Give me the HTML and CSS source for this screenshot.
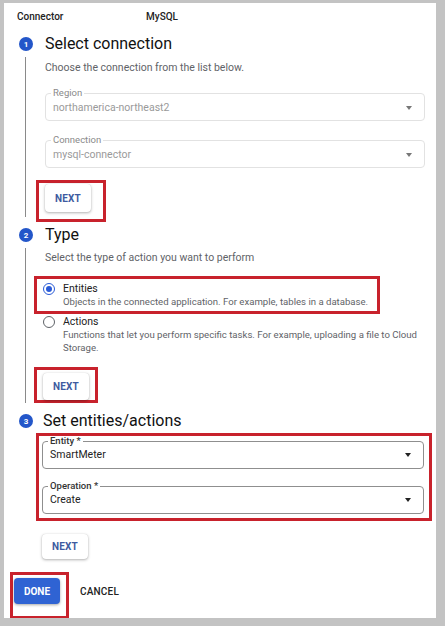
FILE: index.html
```html
<!DOCTYPE html>
<html>
<head>
<meta charset="utf-8">
<link rel="stylesheet" href="styles.css">
</head>
<body>
<div class="panel">
  <div class="hdr"><span class="hdr-k">Connector</span><span class="hdr-v">MySQL</span></div>

  <div class="step">
    <div class="num">1</div>
    <div class="title">Select connection</div>
    <div class="line"></div>
    <div class="body body1">
      <p class="desc">Choose the connection from the list below.</p>
      <fieldset class="field disabled f-region">
        <legend>Region</legend>
        <div class="fv"><span>northamerica-northeast2</span><span class="arrow"></span></div>
      </fieldset>
      <fieldset class="field disabled f-conn">
        <legend>Connection</legend>
        <div class="fv"><span>mysql-connector</span><span class="arrow"></span></div>
      </fieldset>
      <div class="mark mark-next1"><button class="btn-next">NEXT</button></div>
    </div>
  </div>

  <div class="step">
    <div class="num">2</div>
    <div class="title">Type</div>
    <div class="line"></div>
    <div class="body body2">
      <p class="desc">Select the type of action you want to perform</p>
      <div class="mark mark-ent">
        <div class="opt">
          <span class="radio on"></span>
          <div class="opt-text">
            <div class="opt-t">Entities</div>
            <div class="opt-d">Objects in the connected application. For example, tables in a database.</div>
          </div>
        </div>
      </div>
      <div class="opt opt-act">
        <span class="radio"></span>
        <div class="opt-text">
          <div class="opt-t">Actions</div>
          <div class="opt-d">Functions that let you perform specific tasks. For example, uploading a file to Cloud Storage.</div>
        </div>
      </div>
      <div class="mark mark-next2"><button class="btn-next">NEXT</button></div>
    </div>
  </div>

  <div class="step step3">
    <div class="num">3</div>
    <div class="title title3">Set entities/actions</div>
    <div class="body body3">
      <div class="mark mark-fields">
        <fieldset class="field f-ent">
          <legend>Entity *</legend>
          <div class="fv"><span>SmartMeter</span><span class="arrow"></span></div>
        </fieldset>
        <fieldset class="field f-op">
          <legend>Operation *</legend>
          <div class="fv"><span>Create</span><span class="arrow"></span></div>
        </fieldset>
      </div>
      <button class="btn-next next3">NEXT</button>
    </div>
  </div>

  <div class="actions">
    <div class="mark mark-done"><button class="btn-done">DONE</button></div>
    <button class="btn-cancel">CANCEL</button>
  </div>
</div>
</body>
</html>
```

FILE: styles.css
```css
* { box-sizing: border-box; }
html, body { margin: 0; }
body {
  background: #c3c3c3;
  padding: 3px 0 0 4px;
  font-family: Roboto, "Liberation Sans", Arial, sans-serif;
  color: #202124;
  width: 445px;
  height: 626px;
  overflow: hidden;
}
.panel {
  width: 432px;
  height: 615px;
  background: #fff;
  overflow: hidden;
}
.hdr {
  display: flex;
  padding: 8px 0 0 13px;
  font-size: 10px;
  line-height: 12px;
  font-weight: 500;
  color: #222;
}
.hdr-k { width: 129px; }

.step {
  display: grid;
  grid-template-columns: 41px 1fr;
  grid-template-rows: 20px auto;
  margin-top: 11px;
}
.step + .step { margin-top: 2px; }
.num {
  grid-column: 1; grid-row: 1;
  align-self: center;
  margin-left: 15px;
  width: 14px; height: 14px;
  border-radius: 50%;
  background: #2356c9;
  color: #fff;
  font-size: 8px;
  font-weight: 700;
  display: flex; align-items: center; justify-content: center;
}
.title {
  grid-column: 2; grid-row: 1;
  align-self: center;
  font-size: 16px;
  line-height: 20px;
  color: #111;
}
.title3 { margin-left: -2px; }
.line {
  grid-column: 1; grid-row: 2;
  width: 1px;
  margin: 3px 0 6px 21px;
  background: #8a8a8a;
}
.body {
  grid-column: 2; grid-row: 2;
  padding-right: 11px;
}
.body1 { padding-top: 7px; padding-bottom: 1px; }
.body2 { padding-top: 6px; padding-bottom: 6px; }
.body3 { padding-top: 2px; }

.desc {
  margin: 0;
  font-size: 10.5px;
  line-height: 14px;
  color: #5f6368;
}

.field {
  margin: 0;
  min-inline-size: 0;
  border: 1px solid #8f8f8f;
  border-radius: 4px;
  padding: 3px 12px 5px 7px;
}
.f-ent, .f-op { padding: 2px 12px 6px 7px; }
.field legend {
  padding: 0 2px;
  margin-left: -2px;
  font-size: 9.5px;
  line-height: 10px;
  font-weight: 500;
  color: #333;
}
.fv {
  display: flex;
  align-items: center;
  justify-content: space-between;
  font-size: 10.5px;
  line-height: 14px;
  color: #222;
}
.arrow {
  width: 0; height: 0;
  border-left: 3.5px solid transparent;
  border-right: 3.5px solid transparent;
  border-top: 4px solid #222;
}
.disabled { border-color: #e2e2e2; }
.disabled legend { color: #8a8a8a; font-weight: 400; }
.disabled .fv { color: #9a9a9a; }
.disabled .arrow { border-top-color: #777; }
.f-region { margin-top: 13px; }
.f-conn { margin-top: 14px; }

.mark { border: 3px solid #c8222c; }
.mark-next1 {
  display: inline-block;
  margin: 12px 0 0 -9px;
  padding: 1px 12px 7px 6px;
}
.btn-next {
  display: block;
  width: 46px;
  height: 28px;
  border: 0;
  border-radius: 4px;
  background: #fff;
  box-shadow: 0 1px 3px rgba(0,0,0,.3), 0 0 1px rgba(0,0,0,.15);
  font-family: inherit;
  font-size: 10px;
  font-weight: 700;
  letter-spacing: .2px;
  color: #3e5b9f;
  padding: 0;
}

.mark-ent {
  margin: 11px 0 0 -11px;
  width: 346px;
  padding: 3px 0 3px 6px;
}
.opt { display: flex; align-items: flex-start; gap: 8px; }
.opt-act { margin: 1px 0 0 -2px; }
.radio {
  flex: none;
  width: 12px; height: 12px;
  margin-top: 1px;
  border-radius: 50%;
  border: 1.5px solid #5f6368;
  display: flex; align-items: center; justify-content: center;
}
.radio.on { border-color: #2a5bd7; }
.radio.on::after {
  content: "";
  width: 6px; height: 6px;
  border-radius: 50%;
  background: #2a5bd7;
}
.opt-t { font-size: 10.5px; line-height: 13px; color: #222; }
.opt-d { font-size: 9.6px; line-height: 13px; color: #5f6368; max-width: 360px; }
.mark-next2 {
  display: inline-block;
  margin: 13px 0 0 -11px;
  padding: 3px 6px 0 6px;
}
.mark-next2 .btn-next { height: 27px; }

.mark-fields {
  margin-left: -9px;
  width: 396px;
  padding: 0 5px 4px 3px;
}
.f-op { margin-top: 12px; }
.next3 { margin: 13px 0 0 -3px; height: 25px; }

.actions {
  display: flex;
  align-items: flex-start;
  gap: 11px;
  margin: 13px 0 0 6px;
}
.mark-done { padding: 0 6px 12px 1px; }
.btn-done {
  display: block;
  width: 46px; height: 26px;
  margin-top: 3px;
  border: 0;
  border-radius: 4px;
  background: #2f63d3;
  box-shadow: 0 1px 3px rgba(0,0,0,.35);
  color: #fff;
  font-family: inherit;
  font-size: 10px;
  font-weight: 700;
  padding: 0;
}
.btn-cancel {
  margin-top: 14px;
  border: 0; background: none; padding: 0;
  font-family: inherit;
  font-size: 10px;
  font-weight: 500;
  color: #222;
  letter-spacing: .2px;
}
```
